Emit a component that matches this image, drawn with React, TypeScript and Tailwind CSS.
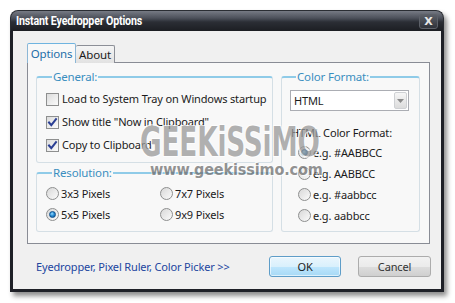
import React from "react";

const UI = { fontFamily: '"Noto Sans", "Open Sans", sans-serif' } as const;

function CheckBox({ checked }: { checked: boolean }) {
  return (
    <span className="relative flex h-[13px] w-[13px] shrink-0 items-center justify-center border border-[#8e8f8f] bg-[linear-gradient(135deg,#dcdcdc,#fbfbfb)]">
      {checked && (
        <svg width="11" height="11" viewBox="0 0 11 11">
          <path d="M2 5.5 L4.3 8.2 L9 2.2" fill="none" stroke="#2b3f94" strokeWidth="2" strokeLinecap="square" />
        </svg>
      )}
    </span>
  );
}

function Radio({ checked }: { checked: boolean }) {
  return (
    <span className="flex h-[13px] w-[13px] shrink-0 items-center justify-center rounded-full border border-[#8e8f8f] bg-[linear-gradient(135deg,#d8d8d8,#fbfbfb)]">
      {checked && (
        <span className="h-[7px] w-[7px] rounded-full border border-[#0d4f8c] bg-[radial-gradient(circle_at_40%_35%,#9bdcff_0%,#2a8fd6_45%,#0a4f90_100%)]" />
      )}
    </span>
  );
}

function CheckRow({ label, checked }: { label: string; checked: boolean }) {
  return (
    <div className="flex h-[22px] items-center gap-[3px] whitespace-nowrap">
      <CheckBox checked={checked} />
      <span>{label}</span>
    </div>
  );
}

function RadioRow({ label, checked }: { label: string; checked: boolean }) {
  return (
    <div className="flex h-[21px] items-center gap-[2px] whitespace-nowrap">
      <Radio checked={checked} />
      <span>{label}</span>
    </div>
  );
}

function Group({
  title,
  className,
  children,
}: {
  title: string;
  className: string;
  children: React.ReactNode;
}) {
  return (
    <fieldset
      className={
        "rounded-[3px] border border-[#d5dfe5] border-t-2 border-t-[#8fcbe8] " + className
      }
    >
      <legend className="ml-[6px] px-[1px] text-[11.5px] leading-[14px] text-[#3a8ebf]">{title}</legend>
      {children}
    </fieldset>
  );
}

export default function App() {
  return (
    <div className="relative h-[303px] w-[455px] overflow-hidden bg-white pl-[10px] pt-[10px] text-[11px] leading-[14px] tracking-[-0.15px] text-[#1b1b1b]" style={UI}>
      <div className="flex h-[282px] w-[434px] flex-col rounded-t-[8px] shadow-[3px_4px_5px_rgba(0,0,0,0.45)]">
        {/* Title bar */}
        <div className="flex h-[21px] shrink-0 items-center justify-between rounded-t-[8px] border border-b-0 border-[#2a2d33] bg-[linear-gradient(to_bottom,#767a84_0%,#4d515b_35%,#2b2e35_55%,#1c1e23_100%)] pl-[5px] pr-[5px]">
          <span
            className="origin-left scale-x-[0.82] whitespace-nowrap text-[13px] font-bold leading-[16px] tracking-[-0.2px] text-white"
            style={{ fontFamily: 'Roboto, "Noto Sans", sans-serif' }}
          >
            Instant Eyedropper Options
          </span>
          <span className="flex h-[15px] w-[19px] items-center justify-center rounded-[3px] border border-[#5d6169] bg-[linear-gradient(to_bottom,#5b5f68,#30333a)] text-[11px] font-bold leading-none text-[#e8e8e8]" style={{ fontFamily: '"DejaVu Sans", sans-serif' }}>
            X
          </span>
        </div>
        {/* Body */}
        <div className="flex flex-1 flex-col border-[3px] border-t-0 border-[#1e2027] bg-[#f0f0f0] pl-[14px] pr-[11px] pt-[12px]">
          {/* Tabs */}
          <div className="relative z-10 -mb-px flex h-[20px] items-end">
            <div className="flex h-[20px] w-[49px] items-center justify-center rounded-t-[2px] border border-b-0 border-[#8cb7d6] border-t-[#6fb4e0] bg-[#f8f8f8] text-[11.5px] text-[#1f6ea8]">
              Options
            </div>
            <div className="flex h-[18px] w-[39px] items-center justify-center rounded-t-[2px] border border-b-0 border-l-0 border-[#8c8f97] bg-[linear-gradient(to_bottom,#f5f5f5,#e2e2e2)] text-[11.5px] text-[#1b1b1b]">
              About
            </div>
          </div>
          {/* Panel */}
          <div className="flex h-[182px] w-[403px] gap-[8px] border border-[#898c95] bg-[#f8f8f8] pl-[8px] pt-[7px]">
            <div className="flex w-[237px] flex-col gap-[3px]">
              <Group title="General:" className="h-[93px] pl-[9px] pt-[4px]">
                <div className="flex flex-col gap-[1px]">
                  <CheckRow label="Load to System Tray on Windows startup" checked={false} />
                  <CheckRow label='Show title "Now in Clipboard"' checked={true} />
                  <CheckRow label="Copy to Clipboard" checked={true} />
                </div>
              </Group>
              <Group title="Resolution:" className="h-[66px] pl-[9px] pt-[3px]">
                <div className="grid grid-cols-[114px_1fr]">
                  <RadioRow label="3x3 Pixels" checked={false} />
                  <RadioRow label="7x7 Pixels" checked={false} />
                  <RadioRow label="5x5 Pixels" checked={true} />
                  <RadioRow label="9x9 Pixels" checked={false} />
                </div>
              </Group>
            </div>
            <Group title="Color Format:" className="h-[162px] w-[139px] pl-[8px] pt-[6px]">
              <div className="flex h-[21px] w-[119px] items-center justify-between border border-[#abadb3] bg-white pl-[3px] pr-[1px]">
                <span>HTML</span>
                <span className="flex h-[17px] w-[13px] items-center justify-center rounded-[2px] border border-[#cfd1d4] bg-[linear-gradient(to_bottom,#f6f6f6,#dcdcdc)]">
                  <svg width="7" height="4" viewBox="0 0 7 4">
                    <path d="M0 0 L7 0 L3.5 4 Z" fill="#8a8a8a" />
                  </svg>
                </span>
              </div>
              <div className="mt-[15px] whitespace-nowrap pl-[1px]">HTML Color Format:</div>
              <div className="mt-[2px] flex flex-col pl-[8px]">
                <RadioRow label="e.g. #AABBCC" checked={true} />
                <RadioRow label="e.g. AABBCC" checked={false} />
                <RadioRow label="e.g. #aabbcc" checked={false} />
                <RadioRow label="e.g. aabbcc" checked={false} />
              </div>
            </Group>
          </div>
          {/* Bottom row */}
          <div className="mt-[12px] flex h-[21px] items-center pl-[9px]">
            <span className="whitespace-nowrap text-[#22459f]">Eyedropper, Pixel Ruler, Color Picker &gt;&gt;</span>
            <div className="ml-auto flex gap-[17px]">
              <div className="flex h-[21px] w-[72px] items-center justify-center rounded-[3px] border border-[#5e9dc8] bg-[linear-gradient(to_bottom,#eaf6fd_0%,#d9f0fc_50%,#bee6fd_51%,#a7d9f5_100%)] shadow-[inset_0_0_0_1px_rgba(255,255,255,0.6)]">
                OK
              </div>
              <div className="-mr-[1px] flex h-[21px] w-[73px] items-center justify-center rounded-[3px] border border-[#acacac] bg-[linear-gradient(to_bottom,#f2f2f2_0%,#ebebeb_50%,#dddddd_51%,#cfcfcf_100%)] text-[#333]">
                Cancel
              </div>
            </div>
          </div>
        </div>
      </div>
      {/* Watermark */}
      <span
        className="pointer-events-none absolute left-[140px] top-[122px] whitespace-nowrap text-[40px] font-bold leading-none text-[#999999] opacity-75"
        style={{
          fontFamily: '"DejaVu Sans Condensed", sans-serif',
          transform: "scaleX(0.73)",
          transformOrigin: "left top",
          textShadow: "1px 1px 0 #fff, -1px -1px 0 #fff, 1px -1px 0 #fff, -1px 1px 0 #fff",
        }}
      >
        GEEKiSSiMO
      </span>
      <span
        className="pointer-events-none absolute left-[150px] top-[161px] whitespace-nowrap text-[16px] font-bold leading-[18px] tracking-[-0.1px] text-[#707070] opacity-75"
        style={{
          fontFamily: '"DejaVu Sans Condensed", sans-serif',
          textShadow: "1px 1px 0 #fff, -1px -1px 0 #fff",
        }}
      >
        www.geekissimo.com
      </span>
    </div>
  );
}
